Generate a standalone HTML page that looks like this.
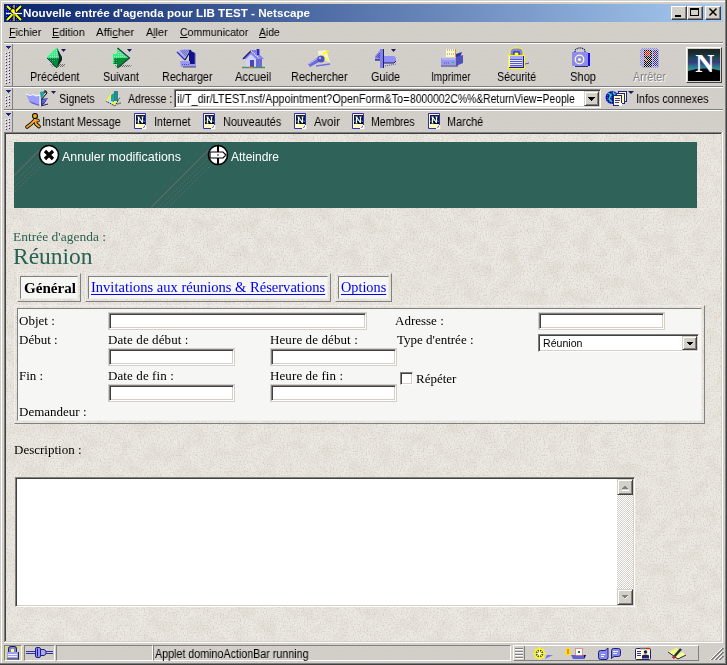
<!DOCTYPE html>
<html><head><meta charset="utf-8"><style>
html,body{margin:0;padding:0;}
body{width:727px;height:665px;overflow:hidden;position:relative;background:#D4D0C8;font-family:"Liberation Sans",sans-serif;}
body>div,body>span{position:absolute;}
span{white-space:pre;-webkit-font-smoothing:antialiased;will-change:transform;}
</style></head><body>
<svg style="position:absolute;left:0;top:0" width="727" height="665"><defs><pattern id="facedots" width="3" height="6" patternUnits="userSpaceOnUse"><rect x="1" y="1" width="1" height="1" fill="#C8CAD2"/><rect x="0" y="3" width="1" height="1" fill="#C8CAD2"/><rect x="2" y="5" width="1" height="1" fill="#C8CAD2"/></pattern></defs><rect width="727" height="665" fill="url(#facedots)"/></svg>
<div style="left:1px;top:1px;width:724px;height:1px;background:#FFFFFF;"></div>
<div style="left:1px;top:1px;width:1px;height:662px;background:#FFFFFF;"></div>
<div style="left:725px;top:0px;width:1px;height:664px;background:#808080;"></div>
<div style="left:0px;top:663px;width:726px;height:1px;background:#808080;"></div>
<div style="left:726px;top:0px;width:1px;height:665px;background:#404040;"></div>
<div style="left:0px;top:664px;width:727px;height:1px;background:#404040;"></div>
<div style="left:4px;top:4px;width:719px;height:18px;background:linear-gradient(to right,#0A246A,#A6CAF0)"></div>
<svg style="position:absolute;left:5px;top:4px;overflow:visible" width="18" height="18" viewBox="5 4 18 18"><defs><pattern id="tchk" width="2" height="2" patternUnits="userSpaceOnUse"><rect width="2" height="2" fill="#0000e8"/><rect width="1" height="1" fill="#108090"/></pattern></defs><rect x="6" y="5" width="16" height="16" fill="url(#tchk)"/><path d="M14 10L22 5V21L14 16Z" fill="#0a2470"/><path d="M7 6L21 20M21 6L7 20" stroke="#000" stroke-width="3.6"/><path d="M7 6L21 20M21 6L7 20" stroke="#ffff00" stroke-width="2"/><path d="M14 5V21" stroke="#000" stroke-width="2.5"/><path d="M14 5V21" stroke="#ffff00" stroke-width="1.2"/><path d="M6 13.5H22" stroke="#ffffff" stroke-width="1.2"/><circle cx="13" cy="11" r="2.5" fill="#ffff00" stroke="#000"/><circle cx="14" cy="13" r="1" fill="#fff"/></svg>
<span style="left:22.90px;top:8.27px;font:700 11.5px/1 'Liberation Sans',sans-serif;color:#fff;transform:scaleX(1.0131);transform-origin:0 0;">Nouvelle entrée d'agenda pour LIB TEST - Netscape</span>
<div style="left:671px;top:6px;width:16px;height:14px;box-sizing:border-box;background:#D4D0C8;border-style:solid;border-width:1px;border-color:#FFFFFF #404040 #404040 #FFFFFF;box-shadow:inset -1px -1px 0 #808080"></div>
<div style="left:687px;top:6px;width:16px;height:14px;box-sizing:border-box;background:#D4D0C8;border-style:solid;border-width:1px;border-color:#FFFFFF #404040 #404040 #FFFFFF;box-shadow:inset -1px -1px 0 #808080"></div>
<div style="left:705px;top:6px;width:16px;height:14px;box-sizing:border-box;background:#D4D0C8;border-style:solid;border-width:1px;border-color:#FFFFFF #404040 #404040 #FFFFFF;box-shadow:inset -1px -1px 0 #808080"></div>
<div style="left:675px;top:15px;width:6px;height:2px;background:#000;"></div>
<div style="left:690px;top:8px;width:9px;height:8px;box-sizing:border-box;border:1px solid #000;border-top-width:2px"></div>
<svg style="position:absolute;left:708px;top:7px" width="10" height="10" viewBox="0 0 10 10"><path d="M1.5 1.5L8.5 8.5M8.5 1.5L1.5 8.5" stroke="#000" stroke-width="1.5"/></svg>
<span style="left:8.50px;top:27.27px;font:400 11.5px/1 'Liberation Sans',sans-serif;color:#000;transform:scaleX(0.9358);transform-origin:0 0;text-underline-offset:1px"><u>F</u>ichier</span>
<span style="left:52.20px;top:27.27px;font:400 11.5px/1 'Liberation Sans',sans-serif;color:#000;transform:scaleX(0.9326);transform-origin:0 0;text-underline-offset:1px"><u>E</u>dition</span>
<span style="left:96.40px;top:27.27px;font:400 11.5px/1 'Liberation Sans',sans-serif;color:#000;transform:scaleX(0.9820);transform-origin:0 0;text-underline-offset:1px">Affi<u>c</u>her</span>
<span style="left:145.90px;top:27.27px;font:400 11.5px/1 'Liberation Sans',sans-serif;color:#000;transform:scaleX(0.9385);transform-origin:0 0;text-underline-offset:1px">A<u>l</u>ler</span>
<span style="left:179.80px;top:27.27px;font:400 11.5px/1 'Liberation Sans',sans-serif;color:#000;transform:scaleX(0.9120);transform-origin:0 0;text-underline-offset:1px"><u>C</u>ommunicator</span>
<span style="left:259.40px;top:27.27px;font:400 11.5px/1 'Liberation Sans',sans-serif;color:#000;transform:scaleX(0.9031);transform-origin:0 0;text-underline-offset:1px"><u>A</u>ide</span>
<div style="left:4px;top:42px;width:719px;height:1px;background:#808080;"></div>
<div style="left:4px;top:43px;width:719px;height:1px;background:#FFFFFF;"></div>
<div style="left:12px;top:44px;width:1px;height:42px;background:#808080;"></div>
<svg style="position:absolute;left:5px;top:46px" width="6" height="4" viewBox="0 0 6 4" shape-rendering="crispEdges"><path d="M0 0H6L3 3Z" fill="#20208a"/></svg>
<div style="left:6px;top:53px;width:1px;height:1px;background:#2a2a90;"></div>
<div style="left:5px;top:52px;width:1px;height:1px;background:#FFFFFF;"></div>
<div style="left:9px;top:52px;width:1px;height:1px;background:#2a2a90;"></div>
<div style="left:8px;top:51px;width:1px;height:1px;background:#FFFFFF;"></div>
<div style="left:6px;top:56px;width:1px;height:1px;background:#2a2a90;"></div>
<div style="left:5px;top:55px;width:1px;height:1px;background:#FFFFFF;"></div>
<div style="left:9px;top:55px;width:1px;height:1px;background:#2a2a90;"></div>
<div style="left:8px;top:54px;width:1px;height:1px;background:#FFFFFF;"></div>
<div style="left:6px;top:59px;width:1px;height:1px;background:#2a2a90;"></div>
<div style="left:5px;top:58px;width:1px;height:1px;background:#FFFFFF;"></div>
<div style="left:9px;top:58px;width:1px;height:1px;background:#2a2a90;"></div>
<div style="left:8px;top:57px;width:1px;height:1px;background:#FFFFFF;"></div>
<div style="left:6px;top:62px;width:1px;height:1px;background:#2a2a90;"></div>
<div style="left:5px;top:61px;width:1px;height:1px;background:#FFFFFF;"></div>
<div style="left:9px;top:61px;width:1px;height:1px;background:#2a2a90;"></div>
<div style="left:8px;top:60px;width:1px;height:1px;background:#FFFFFF;"></div>
<div style="left:6px;top:65px;width:1px;height:1px;background:#2a2a90;"></div>
<div style="left:5px;top:64px;width:1px;height:1px;background:#FFFFFF;"></div>
<div style="left:9px;top:64px;width:1px;height:1px;background:#2a2a90;"></div>
<div style="left:8px;top:63px;width:1px;height:1px;background:#FFFFFF;"></div>
<div style="left:6px;top:68px;width:1px;height:1px;background:#2a2a90;"></div>
<div style="left:5px;top:67px;width:1px;height:1px;background:#FFFFFF;"></div>
<div style="left:9px;top:67px;width:1px;height:1px;background:#2a2a90;"></div>
<div style="left:8px;top:66px;width:1px;height:1px;background:#FFFFFF;"></div>
<div style="left:6px;top:71px;width:1px;height:1px;background:#2a2a90;"></div>
<div style="left:5px;top:70px;width:1px;height:1px;background:#FFFFFF;"></div>
<div style="left:9px;top:70px;width:1px;height:1px;background:#2a2a90;"></div>
<div style="left:8px;top:69px;width:1px;height:1px;background:#FFFFFF;"></div>
<div style="left:6px;top:74px;width:1px;height:1px;background:#2a2a90;"></div>
<div style="left:5px;top:73px;width:1px;height:1px;background:#FFFFFF;"></div>
<div style="left:9px;top:73px;width:1px;height:1px;background:#2a2a90;"></div>
<div style="left:8px;top:72px;width:1px;height:1px;background:#FFFFFF;"></div>
<div style="left:6px;top:77px;width:1px;height:1px;background:#2a2a90;"></div>
<div style="left:5px;top:76px;width:1px;height:1px;background:#FFFFFF;"></div>
<div style="left:9px;top:76px;width:1px;height:1px;background:#2a2a90;"></div>
<div style="left:8px;top:75px;width:1px;height:1px;background:#FFFFFF;"></div>
<div style="left:6px;top:80px;width:1px;height:1px;background:#2a2a90;"></div>
<div style="left:5px;top:79px;width:1px;height:1px;background:#FFFFFF;"></div>
<div style="left:9px;top:79px;width:1px;height:1px;background:#2a2a90;"></div>
<div style="left:8px;top:78px;width:1px;height:1px;background:#FFFFFF;"></div>
<div style="left:6px;top:83px;width:1px;height:1px;background:#2a2a90;"></div>
<div style="left:5px;top:82px;width:1px;height:1px;background:#FFFFFF;"></div>
<div style="left:9px;top:82px;width:1px;height:1px;background:#2a2a90;"></div>
<div style="left:8px;top:81px;width:1px;height:1px;background:#FFFFFF;"></div>
<div style="left:4px;top:86px;width:719px;height:1px;background:#808080;"></div>
<div style="left:4px;top:87px;width:719px;height:1px;background:#FFFFFF;"></div>
<div style="left:12px;top:88px;width:1px;height:21px;background:#808080;"></div>
<svg style="position:absolute;left:5px;top:90px" width="6" height="4" viewBox="0 0 6 4" shape-rendering="crispEdges"><path d="M0 0H6L3 3Z" fill="#20208a"/></svg>
<div style="left:6px;top:97px;width:1px;height:1px;background:#2a2a90;"></div>
<div style="left:5px;top:96px;width:1px;height:1px;background:#FFFFFF;"></div>
<div style="left:9px;top:96px;width:1px;height:1px;background:#2a2a90;"></div>
<div style="left:8px;top:95px;width:1px;height:1px;background:#FFFFFF;"></div>
<div style="left:6px;top:100px;width:1px;height:1px;background:#2a2a90;"></div>
<div style="left:5px;top:99px;width:1px;height:1px;background:#FFFFFF;"></div>
<div style="left:9px;top:99px;width:1px;height:1px;background:#2a2a90;"></div>
<div style="left:8px;top:98px;width:1px;height:1px;background:#FFFFFF;"></div>
<div style="left:6px;top:103px;width:1px;height:1px;background:#2a2a90;"></div>
<div style="left:5px;top:102px;width:1px;height:1px;background:#FFFFFF;"></div>
<div style="left:9px;top:102px;width:1px;height:1px;background:#2a2a90;"></div>
<div style="left:8px;top:101px;width:1px;height:1px;background:#FFFFFF;"></div>
<div style="left:6px;top:106px;width:1px;height:1px;background:#2a2a90;"></div>
<div style="left:5px;top:105px;width:1px;height:1px;background:#FFFFFF;"></div>
<div style="left:9px;top:105px;width:1px;height:1px;background:#2a2a90;"></div>
<div style="left:8px;top:104px;width:1px;height:1px;background:#FFFFFF;"></div>
<div style="left:4px;top:109px;width:719px;height:1px;background:#808080;"></div>
<div style="left:4px;top:110px;width:719px;height:1px;background:#FFFFFF;"></div>
<div style="left:12px;top:111px;width:1px;height:21px;background:#808080;"></div>
<svg style="position:absolute;left:5px;top:113px" width="6" height="4" viewBox="0 0 6 4" shape-rendering="crispEdges"><path d="M0 0H6L3 3Z" fill="#20208a"/></svg>
<div style="left:6px;top:120px;width:1px;height:1px;background:#2a2a90;"></div>
<div style="left:5px;top:119px;width:1px;height:1px;background:#FFFFFF;"></div>
<div style="left:9px;top:119px;width:1px;height:1px;background:#2a2a90;"></div>
<div style="left:8px;top:118px;width:1px;height:1px;background:#FFFFFF;"></div>
<div style="left:6px;top:123px;width:1px;height:1px;background:#2a2a90;"></div>
<div style="left:5px;top:122px;width:1px;height:1px;background:#FFFFFF;"></div>
<div style="left:9px;top:122px;width:1px;height:1px;background:#2a2a90;"></div>
<div style="left:8px;top:121px;width:1px;height:1px;background:#FFFFFF;"></div>
<div style="left:6px;top:126px;width:1px;height:1px;background:#2a2a90;"></div>
<div style="left:5px;top:125px;width:1px;height:1px;background:#FFFFFF;"></div>
<div style="left:9px;top:125px;width:1px;height:1px;background:#2a2a90;"></div>
<div style="left:8px;top:124px;width:1px;height:1px;background:#FFFFFF;"></div>
<div style="left:6px;top:129px;width:1px;height:1px;background:#2a2a90;"></div>
<div style="left:5px;top:128px;width:1px;height:1px;background:#FFFFFF;"></div>
<div style="left:9px;top:128px;width:1px;height:1px;background:#2a2a90;"></div>
<div style="left:8px;top:127px;width:1px;height:1px;background:#FFFFFF;"></div>
<span style="left:29.90px;top:70.84px;font:400 12px/1 'Liberation Sans',sans-serif;color:#000;transform:scaleX(0.9067);transform-origin:0 0;">Précédent</span>
<span style="left:103.30px;top:70.84px;font:400 12px/1 'Liberation Sans',sans-serif;color:#000;transform:scaleX(0.8968);transform-origin:0 0;">Suivant</span>
<span style="left:161.90px;top:70.84px;font:400 12px/1 'Liberation Sans',sans-serif;color:#000;transform:scaleX(0.9013);transform-origin:0 0;">Recharger</span>
<span style="left:234.50px;top:70.84px;font:400 12px/1 'Liberation Sans',sans-serif;color:#000;transform:scaleX(0.9357);transform-origin:0 0;">Accueil</span>
<span style="left:290.90px;top:70.84px;font:400 12px/1 'Liberation Sans',sans-serif;color:#000;transform:scaleX(0.9124);transform-origin:0 0;">Rechercher</span>
<span style="left:370.70px;top:70.84px;font:400 12px/1 'Liberation Sans',sans-serif;color:#000;transform:scaleX(0.9085);transform-origin:0 0;">Guide</span>
<span style="left:430.80px;top:70.84px;font:400 12px/1 'Liberation Sans',sans-serif;color:#000;transform:scaleX(0.8364);transform-origin:0 0;">Imprimer</span>
<span style="left:497.40px;top:70.84px;font:400 12px/1 'Liberation Sans',sans-serif;color:#000;transform:scaleX(0.8903);transform-origin:0 0;">Sécurité</span>
<span style="left:569.60px;top:70.84px;font:400 12px/1 'Liberation Sans',sans-serif;color:#000;transform:scaleX(0.9275);transform-origin:0 0;">Shop</span>
<span style="left:632.60px;top:70.84px;font:400 12px/1 'Liberation Sans',sans-serif;color:#808080;transform:scaleX(0.8940);transform-origin:0 0;text-shadow:1px 1px 0 #fff">Arrêter</span>
<svg width="0" height="0" style="position:absolute"><defs><pattern id="chk" width="2" height="2" patternUnits="userSpaceOnUse"><rect width="2" height="2" fill="#6868d8"/><rect width="1" height="1" fill="#000030"/><rect x="1" y="1" width="1" height="1" fill="#000030"/></pattern><pattern id="chkg" width="2" height="2" patternUnits="userSpaceOnUse"><rect width="2" height="2" fill="#30f080"/><rect width="1" height="1" fill="#e0c0f0"/></pattern><pattern id="chkt" width="2" height="2" patternUnits="userSpaceOnUse"><rect width="2" height="2" fill="#008030"/><rect width="1" height="1" fill="#40a0a0"/></pattern><pattern id="shd" width="2" height="2" patternUnits="userSpaceOnUse"><rect width="1" height="1" fill="#707070"/><rect x="1" y="1" width="1" height="1" fill="#707070"/></pattern></defs></svg>
<svg style="position:absolute;left:44px;top:46px;overflow:visible" width="26" height="24" viewBox="44 46 26 24"><path d="M50 64H66L64 67H53Z" fill="url(#shd)"/><path d="M47 58L57 48L62 58Z" fill="url(#chkg)"/><path d="M47 58L57 48" stroke="#30ff80" stroke-width="1.2"/><path d="M47 58L62 58L57 68Z" fill="#009030"/><path d="M47 58L53 64L57 58Z" fill="url(#chkt)"/><path d="M57 48L62 57L62 60L57 68L59 58Z" fill="#102828"/><path d="M47 58L57 68" stroke="#104040"/><path d="M61 49H66L63.5 52Z" fill="#1a1a5a"/></svg>
<svg style="position:absolute;left:110px;top:46px;overflow:visible" width="26" height="24" viewBox="110 46 26 24"><path d="M114 65H132L130 67H117Z" fill="url(#shd)"/><path d="M113 54H117V48L129 58H113Z" fill="url(#chkg)"/><path d="M113 58H129L117 68V64H113Z" fill="#009030"/><path d="M113 58H118V64H113Z" fill="url(#chkt)"/><path d="M113.5 63.5V54.5H117.5V48.5" stroke="#20ff60" fill="none"/><path d="M117.5 48L129.5 58L117.5 68" stroke="#104040" fill="none" stroke-width="1.2"/><path d="M127 49H132L129.5 52Z" fill="#1a1a5a"/></svg>
<svg style="position:absolute;left:174px;top:46px;overflow:visible" width="26" height="24" viewBox="174 46 26 24"><path d="M177 52L183 49H191L185 60Z" fill="#b0b0ff"/><path d="M180 50H190L185 57Z" fill="url(#chk)" opacity="0.35"/><path d="M177 52L185 60" stroke="#3030b0" stroke-width="1.2"/><path d="M185 60L191 50" stroke="#101040" stroke-width="1.2"/><path d="M189 50L195 53V64H189Z" fill="#10108a"/><path d="M195 53V65" stroke="#5050c0"/><path d="M180 61H190V64H196V67H181Z" fill="#9a9af4"/><path d="M182 64.5H189" stroke="#4848c0" stroke-dasharray="1 1"/><path d="M183 67H196" stroke="#505050"/></svg>
<svg style="position:absolute;left:240px;top:46px;overflow:visible" width="28" height="24" viewBox="240 46 28 24"><path d="M242 59L251 50H256V49H260V55L264 59Z" fill="#8080f0"/><path d="M243 59L251 51" stroke="#202060" stroke-width="1.3"/><path d="M251 51L260 59" stroke="#ffffa0" stroke-width="1.2" stroke-dasharray="1 1"/><path d="M246 59L251 54L256 59V67H246Z" fill="#d0d0ff"/><path d="M256 59H262V67H256Z" fill="#6a6ad0"/><path d="M250 60H254V67H250Z" fill="#4848b0"/><path d="M257 49H259V55H257Z" fill="#3030a0"/><path d="M242 67.5H265" stroke="#409060" stroke-width="1.4"/><path d="M249 67.5H253" stroke="#e08030" stroke-width="1.4"/></svg>
<svg style="position:absolute;left:304px;top:46px;overflow:visible" width="28" height="24" viewBox="304 46 28 24"><path d="M318 51L326 50L330 62L319 58Z" fill="#fffcd0" opacity="0.85"/><path d="M323 54L329 51M324 57L328 60M322 60L324 55" stroke="#ffff00" stroke-width="1.5"/><path d="M308 64L318 57L321 61L310 67Z" fill="#6a6ad8"/><path d="M309 64L318 58" stroke="#c0c0ff"/><circle cx="321" cy="59" r="3.6" fill="#5050c0"/><circle cx="320" cy="58" r="1.2" fill="#b0b0ff"/><path d="M316 66L330 64" stroke="#7070e0" stroke-width="1.5"/></svg>
<svg style="position:absolute;left:372px;top:46px;overflow:visible" width="28" height="24" viewBox="372 46 28 24"><path d="M375 56L381 49H384V60H375Z" fill="#8c8cf0"/><path d="M376 57L381 51V59" fill="url(#chk)" opacity="0.5"/><path d="M375 60H381" stroke="#202060" stroke-width="1.2"/><path d="M380 49H384V68H380Z" fill="#8080f0"/><path d="M383.5 49V68" stroke="#202060"/><path d="M384 56H394L396 58V61L394 63H384Z" fill="#9090f8"/><path d="M384 63H394L396 61" stroke="#202060" fill="none"/><path d="M385 66L396 64" stroke="#5050c0" stroke-dasharray="1 1"/><path d="M391 49H396L393.5 52Z" fill="#1a1a5a"/></svg>
<svg style="position:absolute;left:438px;top:46px;overflow:visible" width="28" height="24" viewBox="438 46 28 24"><path d="M446 49H456V57H446Z" fill="#fff8c0"/><path d="M447 50H455M447 54H455" stroke="#8080e0" stroke-dasharray="1 1"/><path d="M455.5 49V57" stroke="#e09030"/><path d="M456 54L462 52L460 57H456Z" fill="#3030a0"/><path d="M441 58H456V65H441Z" fill="#9898f0"/><path d="M442 59H455" stroke="#c8c8ff"/><path d="M444 63H450" stroke="#5050c0" stroke-dasharray="1 1"/><path d="M456 57L463 55V63L456 66Z" fill="#5050b8"/><path d="M452 62H454V63H452Z" fill="#00e020"/><path d="M441 66H458" stroke="#303080"/></svg>
<svg style="position:absolute;left:506px;top:46px;overflow:visible" width="26" height="24" viewBox="506 46 26 24"><rect x="509.5" y="47.5" width="14" height="11" rx="5" fill="#ffff00"/><rect x="510.5" y="48.5" width="12" height="10" rx="4" fill="#8282e8"/><rect x="513.5" y="51.5" width="6" height="6" fill="#101080"/><rect x="514.5" y="52.5" width="4" height="5" fill="#ffff60"/><rect x="508" y="55" width="17" height="14" fill="#ffff00"/><rect x="509" y="56" width="15" height="12" fill="#a8a8f8"/><path d="M510 59.5H522M510 61.5H522M510 63.5H522M510 65.5H522" stroke="#5858d0"/><path d="M510 60.5H522M510 62.5H522M510 64.5H522" stroke="#e8e8ff"/><path d="M523.5 56V68M509 67.5H524" stroke="#202080"/><path d="M509.5 56V67" stroke="#f0f0ff"/><path d="M525 64L529 63" stroke="#5050c0"/></svg>
<svg style="position:absolute;left:570px;top:46px;overflow:visible" width="24" height="24" viewBox="570 46 24 24"><path d="M575 52V50L578 48H582L585 50V52" stroke="#202070" stroke-width="1.5" fill="none" stroke-dasharray="1 1"/><rect x="572" y="52" width="16" height="14" fill="#8c8cf0"/><path d="M588 53H590V66H588Z" fill="#1010e0"/><circle cx="579.5" cy="59.5" r="4.3" fill="none" stroke="#fffcb0" stroke-width="1.3"/><circle cx="579.5" cy="59.5" r="1.6" fill="#fffcb0"/><path d="M575 66.5H588" stroke="#303060"/></svg>
<svg style="position:absolute;left:636px;top:46px;overflow:visible" width="26" height="24" viewBox="636 46 26 24" shape-rendering="crispEdges"><defs><pattern id="dp1" width="2" height="2" patternUnits="userSpaceOnUse"><rect width="1" height="1" fill="#8c8cf0"/><rect x="1" y="1" width="1" height="1" fill="#8c8cf0"/></pattern><pattern id="dp2" width="2" height="2" patternUnits="userSpaceOnUse"><rect width="1" height="1" fill="#000010"/><rect x="1" y="1" width="1" height="1" fill="#000010"/></pattern><pattern id="dp3" width="2" height="2" patternUnits="userSpaceOnUse"><rect width="1" height="1" fill="#3030a0"/><rect x="1" y="1" width="1" height="1" fill="#3030a0"/></pattern><pattern id="dp4" width="2" height="2" patternUnits="userSpaceOnUse"><rect width="1" height="1" fill="#f01010"/><rect x="1" y="1" width="1" height="1" fill="#f01010"/></pattern></defs><path d="M642 48H657L659 50V66L657 68H642L640 66V50Z" fill="url(#dp1)"/><path d="M644 50H652V67H644Z" fill="url(#dp2)"/><path d="M653 50H658V66H653Z" fill="url(#dp3)"/><path d="M645 51H650V56H645Z" fill="url(#dp4)"/><path d="M654 53H656V55H654Z" fill="url(#dp4)"/><path d="M644 58L647 61" stroke="#f07030" stroke-width="1"/></svg>
<div style="left:686px;top:47px;width:36px;height:36px;box-sizing:border-box;border-style:solid;border-width:1px;border-color:#FFFFFF #404040 #404040 #FFFFFF;background:#D4D0C8"></div>
<svg style="position:absolute;left:688px;top:49px" width="32" height="32" viewBox="0 0 32 32"><defs><linearGradient id="ng" x1="0" y1="0" x2="0" y2="1"><stop offset="0" stop-color="#1a2222"/><stop offset="0.12" stop-color="#1a2a30"/><stop offset="0.3" stop-color="#204a58"/><stop offset="0.42" stop-color="#3a3a80"/><stop offset="0.55" stop-color="#2a7a88"/><stop offset="0.7" stop-color="#3aa0a0"/></linearGradient></defs><rect width="32" height="32" fill="url(#ng)"/><path d="M0 22Q16 17.5 32 21.5V32H0Z" fill="#000"/><text x="16.5" y="23" text-anchor="middle" font-family="Liberation Serif" font-weight="700" font-size="26" fill="#5050c0">N</text><text x="17" y="22.5" text-anchor="middle" font-family="Liberation Serif" font-weight="700" font-size="26" fill="#fff">N</text></svg>
<svg style="position:absolute;left:24px;top:88px;overflow:visible" width="34" height="20" viewBox="24 88 34 20"><path d="M26 94L29 95L32 94L35 96L38 95L40 95L40 106L35 104L30 103Z" fill="#9c9cff"/><path d="M26 94L30 95.5L33 94.5L36 96L40 95" stroke="#ffffff" stroke-width="1" fill="none"/><path d="M29 101L40 105L40 106L33 104Z" fill="#6060d0"/><path d="M40 95L40 106" stroke="#ffffff" stroke-width="1.2"/><path d="M40 92L46 91L41 100Z" fill="#20a0a0"/><path d="M46 91L47 93L41 100" stroke="#000" fill="none"/><path d="M45 90V93" stroke="#000"/><path d="M41 99L48 98L44 104L41 106Z" fill="#3030a0"/><path d="M42 101L47 99M42 103L45 101" stroke="#8080f0"/><path d="M41 106L48 104" stroke="#202060"/><path d="M51 91H56L53.5 94Z" fill="#1a1a5a"/></svg>
<span style="left:58.80px;top:92.84px;font:400 12px/1 'Liberation Sans',sans-serif;color:#000;transform:scaleX(0.8893);transform-origin:0 0;">Signets</span>
<svg style="position:absolute;left:104px;top:88px;overflow:visible" width="20" height="20" viewBox="104 88 20 20"><path d="M106.5 101.5L111.5 93.5L120 97L115 106Z" fill="#c0e0ff"/><path d="M107 101L112 94M116 97L112 104M118 98L114 105" stroke="#ffff00" stroke-width="1.3"/><path d="M114 91H118V101H114Z" fill="#208c8c"/><path d="M111 95L114 93V102L111 101Z" fill="#20a0a0"/><path d="M106.5 101.5L115 106L120 97" stroke="#000" stroke-dasharray="1 1" fill="none"/><path d="M117 104L121 103" stroke="#808080" stroke-width="1.5"/></svg>
<span style="left:127.60px;top:92.84px;font:400 12px/1 'Liberation Sans',sans-serif;color:#000;transform:scaleX(0.8737);transform-origin:0 0;">Adresse :</span>
<div style="left:174px;top:89px;width:427px;height:19px;box-sizing:border-box;background:#fff;border-style:solid;border-width:1px;border-color:#808080 #FFFFFF #FFFFFF #808080;box-shadow:inset 1px 1px 0 #404040,inset -1px -1px 0 #D4D0C8"></div>
<span style="left:177.30px;top:92.84px;font:400 12px/1 'Liberation Sans',sans-serif;color:#000;transform:scaleX(0.9074);transform-origin:0 0;">il/T_dir/LTEST.nsf/Appointment?OpenForm&amp;To=</span>
<span style="left:410.40px;top:92.84px;font:400 12px/1 'Liberation Sans',sans-serif;color:#000;transform:scaleX(0.8632);transform-origin:0 0;">8000002C%%&amp;ReturnView=People</span>
<div style="left:584px;top:91px;width:15px;height:15px;box-sizing:border-box;background:#D4D0C8;border-style:solid;border-width:1px;border-color:#D4D0C8 #404040 #404040 #D4D0C8;box-shadow:inset 1px 1px 0 #FFFFFF,inset -1px -1px 0 #808080"></div>
<svg style="position:absolute;left:584px;top:91px" width="15" height="15" viewBox="0 0 15 15" shape-rendering="crispEdges"><path d="M4 6H11L7.5 10Z" fill="#000"/></svg>
<svg style="position:absolute;left:604px;top:88px;overflow:visible" width="32" height="20" viewBox="604 88 32 20"><defs><pattern id="glb" width="2" height="2" patternUnits="userSpaceOnUse"><rect width="2" height="2" fill="#1a1ac0"/><rect width="1" height="1" fill="#000060"/><rect x="1" y="1" width="1" height="1" fill="#4040f0"/></pattern></defs><circle cx="612" cy="97.5" r="6.5" fill="url(#glb)"/><path d="M608 93L611 95L609 99L612 102M613 92L615 95" stroke="#20e0a0" stroke-width="1.5" fill="none"/><rect x="618.5" y="91.5" width="8" height="10" fill="#fffcc0" stroke="#202090"/><rect x="616.5" y="93.5" width="8" height="10" fill="#fffcc0" stroke="#202090"/><rect x="613.5" y="95.5" width="8" height="10" fill="#fffcc0" stroke="#202090"/><path d="M615 98.5H620M615 100.5H620M615 102.5H619" stroke="#4040a0"/><path d="M619 103H622V106H619Z" fill="#fff"/><path d="M628 91H634L631 94Z" fill="#1a1a5a"/></svg>
<span style="left:635.80px;top:92.84px;font:400 12px/1 'Liberation Sans',sans-serif;color:#000;transform:scaleX(0.8982);transform-origin:0 0;">Infos connexes</span>
<svg style="position:absolute;left:24px;top:111px;overflow:visible" width="18" height="20" viewBox="24 111 18 20"><path d="M35 120L31 124L27 127M35 120L36 124L39 126.5M34.5 120L38 120.5" stroke="#000" stroke-width="3.6" stroke-linecap="round" fill="none"/><circle cx="35" cy="116" r="3" fill="#000"/><path d="M35 120L31 124L27 127M35 120L36 124L39 126.5M34.5 120L38 120.5" stroke="#f5a623" stroke-width="2" stroke-linecap="round" fill="none"/><circle cx="35" cy="116" r="2" fill="#f5a623"/></svg>
<span style="left:42.30px;top:115.84px;font:400 12px/1 'Liberation Sans',sans-serif;color:#000;transform:scaleX(0.8925);transform-origin:0 0;">Instant Message</span>
<svg style="position:absolute;left:133px;top:112px;overflow:visible" width="16" height="18" viewBox="133 112 16 18"><path d="M134.5 113.5H145.5V125L143 128.5H134.5Z" fill="#fffcc8" stroke="#3030a8"/><path d="M145.5 125V128.5H142" stroke="#ffffff" stroke-width="1.5" fill="none"/><rect x="136" y="115" width="9" height="9" fill="#101850"/><path d="M136 122Q140.5 119 145 122V124H136Z" fill="#000"/><path d="M136 121.5Q140.5 118.5 145 121.5" stroke="#20a0a0" fill="none"/><path d="M137.5 117H139.5M141.5 117H143.5M138.5 117V123M142.5 117V123M138.5 117L142.5 123M137.5 123H139.5" stroke="#ffffff" stroke-width="1.1"/></svg>
<span style="left:153.80px;top:115.84px;font:400 12px/1 'Liberation Sans',sans-serif;color:#000;transform:scaleX(0.8992);transform-origin:0 0;">Internet</span>
<svg style="position:absolute;left:202px;top:112px;overflow:visible" width="16" height="18" viewBox="202 112 16 18"><path d="M203.5 113.5H214.5V125L212 128.5H203.5Z" fill="#fffcc8" stroke="#3030a8"/><path d="M214.5 125V128.5H211" stroke="#ffffff" stroke-width="1.5" fill="none"/><rect x="205" y="115" width="9" height="9" fill="#101850"/><path d="M205 122Q209.5 119 214 122V124H205Z" fill="#000"/><path d="M205 121.5Q209.5 118.5 214 121.5" stroke="#20a0a0" fill="none"/><path d="M206.5 117H208.5M210.5 117H212.5M207.5 117V123M211.5 117V123M207.5 117L211.5 123M206.5 123H208.5" stroke="#ffffff" stroke-width="1.1"/></svg>
<span style="left:223.10px;top:115.84px;font:400 12px/1 'Liberation Sans',sans-serif;color:#000;transform:scaleX(0.9103);transform-origin:0 0;">Nouveautés</span>
<svg style="position:absolute;left:293px;top:112px;overflow:visible" width="16" height="18" viewBox="293 112 16 18"><path d="M294.5 113.5H305.5V125L303 128.5H294.5Z" fill="#fffcc8" stroke="#3030a8"/><path d="M305.5 125V128.5H302" stroke="#ffffff" stroke-width="1.5" fill="none"/><rect x="296" y="115" width="9" height="9" fill="#101850"/><path d="M296 122Q300.5 119 305 122V124H296Z" fill="#000"/><path d="M296 121.5Q300.5 118.5 305 121.5" stroke="#20a0a0" fill="none"/><path d="M297.5 117H299.5M301.5 117H303.5M298.5 117V123M302.5 117V123M298.5 117L302.5 123M297.5 123H299.5" stroke="#ffffff" stroke-width="1.1"/></svg>
<span style="left:313.60px;top:115.84px;font:400 12px/1 'Liberation Sans',sans-serif;color:#000;transform:scaleX(0.9512);transform-origin:0 0;">Avoir</span>
<svg style="position:absolute;left:351px;top:112px;overflow:visible" width="16" height="18" viewBox="351 112 16 18"><path d="M352.5 113.5H363.5V125L361 128.5H352.5Z" fill="#fffcc8" stroke="#3030a8"/><path d="M363.5 125V128.5H360" stroke="#ffffff" stroke-width="1.5" fill="none"/><rect x="354" y="115" width="9" height="9" fill="#101850"/><path d="M354 122Q358.5 119 363 122V124H354Z" fill="#000"/><path d="M354 121.5Q358.5 118.5 363 121.5" stroke="#20a0a0" fill="none"/><path d="M355.5 117H357.5M359.5 117H361.5M356.5 117V123M360.5 117V123M356.5 117L360.5 123M355.5 123H357.5" stroke="#ffffff" stroke-width="1.1"/></svg>
<span style="left:371.10px;top:115.84px;font:400 12px/1 'Liberation Sans',sans-serif;color:#000;transform:scaleX(0.8717);transform-origin:0 0;">Membres</span>
<svg style="position:absolute;left:427px;top:112px;overflow:visible" width="16" height="18" viewBox="427 112 16 18"><path d="M428.5 113.5H439.5V125L437 128.5H428.5Z" fill="#fffcc8" stroke="#3030a8"/><path d="M439.5 125V128.5H436" stroke="#ffffff" stroke-width="1.5" fill="none"/><rect x="430" y="115" width="9" height="9" fill="#101850"/><path d="M430 122Q434.5 119 439 122V124H430Z" fill="#000"/><path d="M430 121.5Q434.5 118.5 439 121.5" stroke="#20a0a0" fill="none"/><path d="M431.5 117H433.5M435.5 117H437.5M432.5 117V123M436.5 117V123M432.5 117L436.5 123M431.5 123H433.5" stroke="#ffffff" stroke-width="1.1"/></svg>
<span style="left:446.80px;top:115.84px;font:400 12px/1 'Liberation Sans',sans-serif;color:#000;transform:scaleX(0.9046);transform-origin:0 0;">Marché</span>
<div style="left:4px;top:132px;width:719px;height:1px;background:#808080;"></div>
<div style="left:4px;top:132px;width:1px;height:511px;background:#808080;"></div>
<div style="left:5px;top:133px;width:717px;height:1px;background:#404040;"></div>
<div style="left:5px;top:133px;width:1px;height:509px;background:#404040;"></div>
<div style="left:722px;top:132px;width:1px;height:511px;background:#FFFFFF;"></div>
<div style="left:4px;top:642px;width:719px;height:1px;background:#FFFFFF;"></div>
<div style="left:721px;top:133px;width:1px;height:509px;background:#D4D0C8;"></div>
<div style="left:5px;top:641px;width:717px;height:1px;background:#D4D0C8;"></div>
<div style="left:6px;top:134px;width:715px;height:507px;background:#ECE9E3"></div>
<svg style="position:absolute;left:6px;top:134px" width="715" height="507"><filter id="paper" x="0" y="0" width="100%" height="100%" color-interpolation-filters="sRGB"><feTurbulence type="fractalNoise" baseFrequency="0.07" numOctaves="3" seed="7" result="n1"/><feColorMatrix in="n1" type="matrix" values="0 0 0 0 0.79  0 0 0 0 0.75  0 0 0 0 0.69  -0.55 0 0 0 0.33" result="c1"/><feTurbulence type="fractalNoise" baseFrequency="0.7" numOctaves="1" seed="3" result="n2"/><feColorMatrix in="n2" type="matrix" values="0 0 0 0 0.80  0 0 0 0 0.77  0 0 0 0 0.72  -2.2 0 0 0 1.18" result="c2"/><feMerge><feMergeNode in="c1"/><feMergeNode in="c2"/></feMerge></filter><rect width="715" height="507" filter="url(#paper)"/></svg>
<div style="left:14px;top:142px;width:683px;height:66px;background:#2F6359;"></div>
<svg style="position:absolute;left:14px;top:142px" width="683" height="66" viewBox="14 142 683 66"><path d="M151 207.5L208.5 150" stroke="#7c6c6a" stroke-width="1"/><path d="M158 207.5L207 159" stroke="#7c6c6a" stroke-width="1" stroke-dasharray="1 1.83"/><path d="M163 207.5L209 162.5" stroke="#7c6c6a" stroke-width="1" stroke-dasharray="1 1.83"/><path d="M168 207.5L210.5 165.5" stroke="#7c6c6a" stroke-width="1" stroke-dasharray="1 1.83"/><path d="M-18 207.5L39.5 150" stroke="#7c6c6a" stroke-width="1"/><path d="M-11 207.5L38 159" stroke="#7c6c6a" stroke-width="1" stroke-dasharray="1 1.83"/><path d="M-6 207.5L40 162.5" stroke="#7c6c6a" stroke-width="1" stroke-dasharray="1 1.83"/><path d="M-1 207.5L41.5 165.5" stroke="#7c6c6a" stroke-width="1" stroke-dasharray="1 1.83"/></svg>
<svg style="position:absolute;left:38px;top:144px" width="22" height="22" viewBox="0 0 22 22"><circle cx="11" cy="11" r="9.5" fill="#fff" stroke="#000" stroke-width="1.6"/><path d="M7 7L15 15M15 7L7 15" stroke="#000" stroke-width="3.2"/></svg>
<span style="left:61.60px;top:150.84px;font:400 12px/1 'Liberation Sans',sans-serif;color:#fff;transform:scaleX(1.0372);transform-origin:0 0;">Annuler modifications</span>
<svg style="position:absolute;left:207px;top:144px" width="22" height="22" viewBox="0 0 22 22"><circle cx="11" cy="11" r="9.5" fill="#fff" stroke="#000" stroke-width="1.6"/><path d="M3 8H16L19 11L16 14H3Z" fill="#fff" stroke="#000" stroke-width="1.2"/><path d="M11 2V8M11 14V20" stroke="#000" stroke-width="2"/><circle cx="11" cy="11" r="0.8" fill="#000"/></svg>
<span style="left:230.60px;top:150.84px;font:400 12px/1 'Liberation Sans',sans-serif;color:#fff;transform:scaleX(0.9993);transform-origin:0 0;">Atteindre</span>
<span style="left:13.40px;top:230.11px;font:400 13px/1 'Liberation Serif',serif;color:#286152;transform:scaleX(1.0369);transform-origin:0 0;">Entrée d'agenda :</span>
<span style="left:13.40px;top:244.74px;font:400 23px/1 'Liberation Serif',serif;color:#286152;transform:scaleX(1.0211);transform-origin:0 0;">Réunion</span>
<div style="left:17px;top:273px;width:64px;height:29px;box-sizing:border-box;border-style:solid;border-width:1px;border-color:#F0EEEA #808080 #808080 #F0EEEA"></div>
<div style="left:20px;top:276px;width:58px;height:23px;box-sizing:border-box;background:#F6F6F4;border-style:solid;border-width:1px;border-color:#808080 #F0EEEA #F0EEEA #808080"></div>
<span style="left:23.60px;top:282.27px;font:700 14px/1 'Liberation Serif',serif;color:#000;transform:scaleX(1.0784);transform-origin:0 0;">Général</span>
<div style="left:85px;top:273px;width:246px;height:29px;box-sizing:border-box;border-style:solid;border-width:1px;border-color:#F0EEEA #808080 #808080 #F0EEEA"></div>
<div style="left:88px;top:276px;width:240px;height:23px;box-sizing:border-box;background:#F6F6F4;border-style:solid;border-width:1px;border-color:#808080 #F0EEEA #F0EEEA #808080"></div>
<span style="left:90.90px;top:280.77px;font:400 14px/1 'Liberation Serif',serif;color:#0000EE;transform:scaleX(1.0380);transform-origin:0 0;text-decoration:underline;text-underline-offset:2px;text-decoration-skip-ink:none">Invitations aux réunions &amp; Réservations</span>
<div style="left:335px;top:273px;width:57px;height:29px;box-sizing:border-box;border-style:solid;border-width:1px;border-color:#F0EEEA #808080 #808080 #F0EEEA"></div>
<div style="left:338px;top:276px;width:51px;height:23px;box-sizing:border-box;background:#F6F6F4;border-style:solid;border-width:1px;border-color:#808080 #F0EEEA #F0EEEA #808080"></div>
<span style="left:340.80px;top:280.77px;font:400 14px/1 'Liberation Serif',serif;color:#0000EE;transform:scaleX(1.0193);transform-origin:0 0;text-decoration:underline;text-underline-offset:2px;text-decoration-skip-ink:none">Options</span>
<div style="left:14px;top:305px;width:691px;height:119px;box-sizing:border-box;border-style:solid;border-width:1px;border-color:#F0EEEA #808080 #808080 #F0EEEA"></div>
<div style="left:17px;top:308px;width:685px;height:113px;box-sizing:border-box;background:#F6F6F4;border-style:solid;border-width:1px;border-color:#808080 #F0EEEA #F0EEEA #808080"></div>
<span style="left:19.00px;top:314.11px;font:400 13px/1 'Liberation Serif',serif;color:#000;">Objet :</span>
<span style="left:19.00px;top:333.11px;font:400 13px/1 'Liberation Serif',serif;color:#000;">Début :</span>
<span style="left:108.00px;top:333.11px;font:400 13px/1 'Liberation Serif',serif;color:#000;letter-spacing:0.1px;">Date de début :</span>
<span style="left:269.50px;top:333.11px;font:400 13px/1 'Liberation Serif',serif;color:#000;letter-spacing:0.1px;">Heure de début :</span>
<span style="left:395.40px;top:314.11px;font:400 13px/1 'Liberation Serif',serif;color:#000;">Adresse :</span>
<span style="left:397.40px;top:333.11px;font:400 13px/1 'Liberation Serif',serif;color:#000;">Type d'entrée :</span>
<span style="left:19.00px;top:369.11px;font:400 13px/1 'Liberation Serif',serif;color:#000;">Fin :</span>
<span style="left:108.00px;top:369.11px;font:400 13px/1 'Liberation Serif',serif;color:#000;letter-spacing:0.1px;">Date de fin :</span>
<span style="left:269.50px;top:369.11px;font:400 13px/1 'Liberation Serif',serif;color:#000;letter-spacing:0.1px;">Heure de fin :</span>
<span style="left:416.00px;top:372.11px;font:400 13px/1 'Liberation Serif',serif;color:#000;">Répéter</span>
<span style="left:19.00px;top:405.11px;font:400 13px/1 'Liberation Serif',serif;color:#000;">Demandeur :</span>
<div style="left:108px;top:312px;width:259px;height:18px;box-sizing:border-box;border:1px solid #D4D0C8"></div>
<div style="left:109px;top:313px;width:257px;height:16px;box-sizing:border-box;background:#fff;border-style:solid;border-width:1px;border-color:#808080 #FFFFFF #FFFFFF #808080;box-shadow:inset 1px 1px 0 #404040,inset -1px -1px 0 #D4D0C8"></div>
<div style="left:108px;top:348px;width:127px;height:18px;box-sizing:border-box;border:1px solid #D4D0C8"></div>
<div style="left:109px;top:349px;width:125px;height:16px;box-sizing:border-box;background:#fff;border-style:solid;border-width:1px;border-color:#808080 #FFFFFF #FFFFFF #808080;box-shadow:inset 1px 1px 0 #404040,inset -1px -1px 0 #D4D0C8"></div>
<div style="left:270px;top:348px;width:127px;height:18px;box-sizing:border-box;border:1px solid #D4D0C8"></div>
<div style="left:271px;top:349px;width:125px;height:16px;box-sizing:border-box;background:#fff;border-style:solid;border-width:1px;border-color:#808080 #FFFFFF #FFFFFF #808080;box-shadow:inset 1px 1px 0 #404040,inset -1px -1px 0 #D4D0C8"></div>
<div style="left:108px;top:384px;width:127px;height:18px;box-sizing:border-box;border:1px solid #D4D0C8"></div>
<div style="left:109px;top:385px;width:125px;height:16px;box-sizing:border-box;background:#fff;border-style:solid;border-width:1px;border-color:#808080 #FFFFFF #FFFFFF #808080;box-shadow:inset 1px 1px 0 #404040,inset -1px -1px 0 #D4D0C8"></div>
<div style="left:270px;top:384px;width:127px;height:18px;box-sizing:border-box;border:1px solid #D4D0C8"></div>
<div style="left:271px;top:385px;width:125px;height:16px;box-sizing:border-box;background:#fff;border-style:solid;border-width:1px;border-color:#808080 #FFFFFF #FFFFFF #808080;box-shadow:inset 1px 1px 0 #404040,inset -1px -1px 0 #D4D0C8"></div>
<div style="left:538px;top:312px;width:127px;height:18px;box-sizing:border-box;border:1px solid #D4D0C8"></div>
<div style="left:539px;top:313px;width:125px;height:16px;box-sizing:border-box;background:#fff;border-style:solid;border-width:1px;border-color:#808080 #FFFFFF #FFFFFF #808080;box-shadow:inset 1px 1px 0 #404040,inset -1px -1px 0 #D4D0C8"></div>
<div style="left:538px;top:334px;width:161px;height:18px;box-sizing:border-box;background:#fff;border-style:solid;border-width:1px;border-color:#808080 #FFFFFF #FFFFFF #808080;box-shadow:inset 1px 1px 0 #404040,inset -1px -1px 0 #D4D0C8"></div>
<div style="left:682px;top:336px;width:15px;height:14px;box-sizing:border-box;background:#D4D0C8;border-style:solid;border-width:1px;border-color:#D4D0C8 #404040 #404040 #D4D0C8;box-shadow:inset 1px 1px 0 #FFFFFF,inset -1px -1px 0 #808080"></div>
<svg style="position:absolute;left:682px;top:336px" width="15" height="14" viewBox="0 0 15 14" shape-rendering="crispEdges"><path d="M4 6H11L7.5 9.5Z" fill="#000"/></svg>
<span style="left:543.00px;top:339.04px;font:400 10px/1 'Liberation Sans',sans-serif;color:#000;transform:scaleX(1.0573);transform-origin:0 0;">Réunion</span>
<div style="left:400px;top:372px;width:13px;height:13px;box-sizing:border-box;background:#fff;border-style:solid;border-width:1px;border-color:#808080 #FFFFFF #FFFFFF #808080;box-shadow:inset 1px 1px 0 #404040,inset -1px -1px 0 #D4D0C8"></div>
<span style="left:14.00px;top:443.11px;font:400 13px/1 'Liberation Serif',serif;color:#000;">Description :</span>
<div style="left:15px;top:477px;width:620px;height:130px;box-sizing:border-box;background:#fff;border-style:solid;border-width:1px;border-color:#808080 #FFFFFF #FFFFFF #808080;box-shadow:inset 1px 1px 0 #404040,inset -1px -1px 0 #D4D0C8"></div>
<div style="left:617px;top:495px;width:16px;height:94px;background-color:#fff;background-image:linear-gradient(45deg,#D4D0C8 25%,transparent 25%,transparent 75%,#D4D0C8 75%),linear-gradient(45deg,#D4D0C8 25%,transparent 25%,transparent 75%,#D4D0C8 75%);background-size:2px 2px;background-position:0 0,1px 1px"></div>
<div style="left:617px;top:479px;width:16px;height:16px;box-sizing:border-box;background:#D4D0C8;border-style:solid;border-width:1px;border-color:#D4D0C8 #404040 #404040 #D4D0C8;box-shadow:inset 1px 1px 0 #FFFFFF,inset -1px -1px 0 #808080"></div>
<svg style="position:absolute;left:617px;top:479px" width="16" height="16" viewBox="0 0 16 16" shape-rendering="crispEdges"><path d="M4 10H11L7.5 6.5Z" fill="#808080"/><path d="M5 11H12" stroke="#fff"/></svg>
<div style="left:617px;top:589px;width:16px;height:16px;box-sizing:border-box;background:#D4D0C8;border-style:solid;border-width:1px;border-color:#D4D0C8 #404040 #404040 #D4D0C8;box-shadow:inset 1px 1px 0 #FFFFFF,inset -1px -1px 0 #808080"></div>
<svg style="position:absolute;left:617px;top:589px" width="16" height="16" viewBox="0 0 16 16" shape-rendering="crispEdges"><path d="M4 6H11L7.5 9.5Z" fill="#808080"/><path d="M8 10L11 7" stroke="#fff"/></svg>
<div style="left:4px;top:645px;width:18px;height:16px;box-sizing:border-box;background:transparent;border-style:solid;border-width:1px;border-color:#808080 #FFFFFF #FFFFFF #808080"></div>
<svg style="position:absolute;left:4px;top:645px;overflow:visible" width="18" height="16" viewBox="4 645 18 16"><rect x="5.5" y="646.5" width="15" height="13" fill="none" stroke="#f0f000" stroke-dasharray="1 1"/><rect x="8" y="646" width="9" height="8" rx="3" fill="#202060"/><rect x="9" y="647" width="7" height="6" rx="2" fill="#8080e0"/><rect x="11" y="649" width="3" height="3" fill="#ffff60"/><rect x="7" y="652" width="12" height="7" fill="#a0a0f0"/><path d="M8 654.5H17M8 656.5H17" stroke="#f0f0ff"/><path d="M18.5 652V659.5M7 659H19" stroke="#202080"/></svg>
<div style="left:24px;top:645px;width:31px;height:16px;box-sizing:border-box;background:transparent;border-style:solid;border-width:1px;border-color:#808080 #FFFFFF #FFFFFF #808080"></div>
<svg style="position:absolute;left:24px;top:645px;overflow:visible" width="31" height="16" viewBox="24 645 31 16"><path d="M26 652.5H53" stroke="#303090" stroke-width="3"/><path d="M26 652.5H53" stroke="#c8c8ff" stroke-width="1"/><rect x="35.5" y="647.5" width="5" height="10" rx="1.5" fill="#9898f0" stroke="#202080"/><path d="M37.5 648.5V656.5" stroke="#1010d0"/><path d="M40.5 649.5H44L46 651V654L44 655.5H40.5Z" fill="#a8a8f8" stroke="#202080"/></svg>
<div style="left:56px;top:645px;width:97px;height:16px;box-sizing:border-box;background:transparent;border-style:solid;border-width:1px;border-color:#808080 #FFFFFF #FFFFFF #808080"></div>
<div style="left:153px;top:645px;width:358px;height:16px;box-sizing:border-box;background:transparent;border-style:solid;border-width:1px;border-color:#808080 #FFFFFF #FFFFFF #808080"></div>
<span style="left:154.80px;top:647.84px;font:400 12px/1 'Liberation Sans',sans-serif;color:#000;transform:scaleX(0.8919);transform-origin:0 0;">Applet dominoActionBar running</span>
<div style="left:513px;top:645px;width:186px;height:16px;box-sizing:border-box;border-style:solid;border-width:1px;border-color:#FFFFFF #808080 #808080 #FFFFFF"></div>
<svg style="position:absolute;left:513px;top:645px;overflow:visible" width="186" height="16" viewBox="513 645 186 16"><path d="M515 648.5H523M515 651.5H523M515 654.5H523M515 657.5H523" stroke="#808080"/><path d="M515 649.5H523M515 652.5H523M515 655.5H523M515 658.5H523" stroke="#ffffff"/><path d="M524.5 646V660" stroke="#808080"/><circle cx="539.5" cy="653.5" r="4.5" fill="#3a3aa0"/><circle cx="539.5" cy="653.5" r="4.5" fill="none" stroke="#ffff00" stroke-width="1.3"/><path d="M539.5 647V660M533 653.5H546M535 649L544 658M544 649L535 658" stroke="#ffff00" stroke-width="1.1"/><path d="M539.5 651V656M537 653.5H542" stroke="#ffffff"/><path d="M545 659L553 655H547Z" fill="#7070f0"/><path d="M566 648H570V652H572L568 656L564 652H566Z" fill="#ffe000"/><path d="M568 649V654" stroke="#e04020"/><path d="M571 655H586L584 659H573Z" fill="#6060d0"/><path d="M584 655L586 655L584 659" fill="#101040"/><rect x="575.5" y="648.5" width="7" height="7" fill="#ffffff" stroke="#d04040" stroke-dasharray="1 1"/><rect x="578" y="651" width="2" height="2" fill="#008000"/><path d="M598.5 652.5Q598.5 650.5 600.5 650.5H605L608 648V653V657.5Q608 659.5 606 659.5H600.5Q598.5 659.5 598.5 657.5Z" fill="#8888ec" stroke="#202080"/><path d="M601 654.5H605M601 656.5H604" stroke="#e0ffe0"/><path d="M611.5 650.5Q611.5 648.5 613.5 648.5H618.5Q620.5 648.5 620.5 650.5V654.5Q620.5 656.5 618.5 656.5H614L611.5 658.5Z" fill="#8888ec" stroke="#202080"/><path d="M613 651.5H618M613 653.5H617" stroke="#e0ffe0"/><rect x="635.5" y="648.5" width="15" height="11" rx="1" fill="#fffcd0" stroke="#202070"/><path d="M640 648.5H643" stroke="#a040c0" stroke-width="1.5"/><path d="M643 648.5H646" stroke="#20a040" stroke-width="1.5"/><path d="M646 648.5H650" stroke="#e02020" stroke-width="1.5"/><path d="M637 651.5H641M637 653.5H641M637 655.5H641" stroke="#3030a0"/><circle cx="645.5" cy="652" r="1.8" fill="#202070"/><path d="M642 658.5V656Q642 654.5 645.5 654.5Q649 654.5 649 656V658.5Z" fill="#202070"/><path d="M668 652L676 648L686 655L678 659Z" fill="#fffca0"/><path d="M670 652L676 649M672 654L679 650M675 656L682 652" stroke="#e0e000" stroke-dasharray="1 1"/><path d="M668 652L678 659L686 655" stroke="#202040" fill="none"/><path d="M673 658L681 649" stroke="#103838" stroke-width="2.5"/><path d="M673 658L675 656" stroke="#e02020" stroke-width="2"/></svg>
<svg style="position:absolute;left:706px;top:644px;overflow:visible" width="20" height="20" viewBox="706 644 20 20" shape-rendering="crispEdges"><rect x="710" y="659" width="1" height="1" fill="#ffffff"/><rect x="711" y="659" width="2" height="1" fill="#808080"/><rect x="711" y="658" width="1" height="1" fill="#ffffff"/><rect x="712" y="658" width="2" height="1" fill="#808080"/><rect x="712" y="657" width="1" height="1" fill="#ffffff"/><rect x="713" y="657" width="2" height="1" fill="#808080"/><rect x="713" y="656" width="1" height="1" fill="#ffffff"/><rect x="714" y="656" width="2" height="1" fill="#808080"/><rect x="714" y="655" width="1" height="1" fill="#ffffff"/><rect x="715" y="655" width="2" height="1" fill="#808080"/><rect x="715" y="654" width="1" height="1" fill="#ffffff"/><rect x="716" y="654" width="2" height="1" fill="#808080"/><rect x="716" y="653" width="1" height="1" fill="#ffffff"/><rect x="717" y="653" width="2" height="1" fill="#808080"/><rect x="717" y="652" width="1" height="1" fill="#ffffff"/><rect x="718" y="652" width="2" height="1" fill="#808080"/><rect x="718" y="651" width="1" height="1" fill="#ffffff"/><rect x="719" y="651" width="2" height="1" fill="#808080"/><rect x="719" y="650" width="1" height="1" fill="#ffffff"/><rect x="720" y="650" width="2" height="1" fill="#808080"/><rect x="720" y="649" width="1" height="1" fill="#ffffff"/><rect x="721" y="649" width="2" height="1" fill="#808080"/><rect x="721" y="648" width="1" height="1" fill="#ffffff"/><rect x="722" y="648" width="2" height="1" fill="#808080"/><rect x="714" y="659" width="1" height="1" fill="#ffffff"/><rect x="715" y="659" width="2" height="1" fill="#808080"/><rect x="715" y="658" width="1" height="1" fill="#ffffff"/><rect x="716" y="658" width="2" height="1" fill="#808080"/><rect x="716" y="657" width="1" height="1" fill="#ffffff"/><rect x="717" y="657" width="2" height="1" fill="#808080"/><rect x="717" y="656" width="1" height="1" fill="#ffffff"/><rect x="718" y="656" width="2" height="1" fill="#808080"/><rect x="718" y="655" width="1" height="1" fill="#ffffff"/><rect x="719" y="655" width="2" height="1" fill="#808080"/><rect x="719" y="654" width="1" height="1" fill="#ffffff"/><rect x="720" y="654" width="2" height="1" fill="#808080"/><rect x="720" y="653" width="1" height="1" fill="#ffffff"/><rect x="721" y="653" width="2" height="1" fill="#808080"/><rect x="721" y="652" width="1" height="1" fill="#ffffff"/><rect x="722" y="652" width="2" height="1" fill="#808080"/><rect x="718" y="659" width="1" height="1" fill="#ffffff"/><rect x="719" y="659" width="2" height="1" fill="#808080"/><rect x="719" y="658" width="1" height="1" fill="#ffffff"/><rect x="720" y="658" width="2" height="1" fill="#808080"/><rect x="720" y="657" width="1" height="1" fill="#ffffff"/><rect x="721" y="657" width="2" height="1" fill="#808080"/><rect x="721" y="656" width="1" height="1" fill="#ffffff"/><rect x="722" y="656" width="2" height="1" fill="#808080"/></svg>
</body></html>
